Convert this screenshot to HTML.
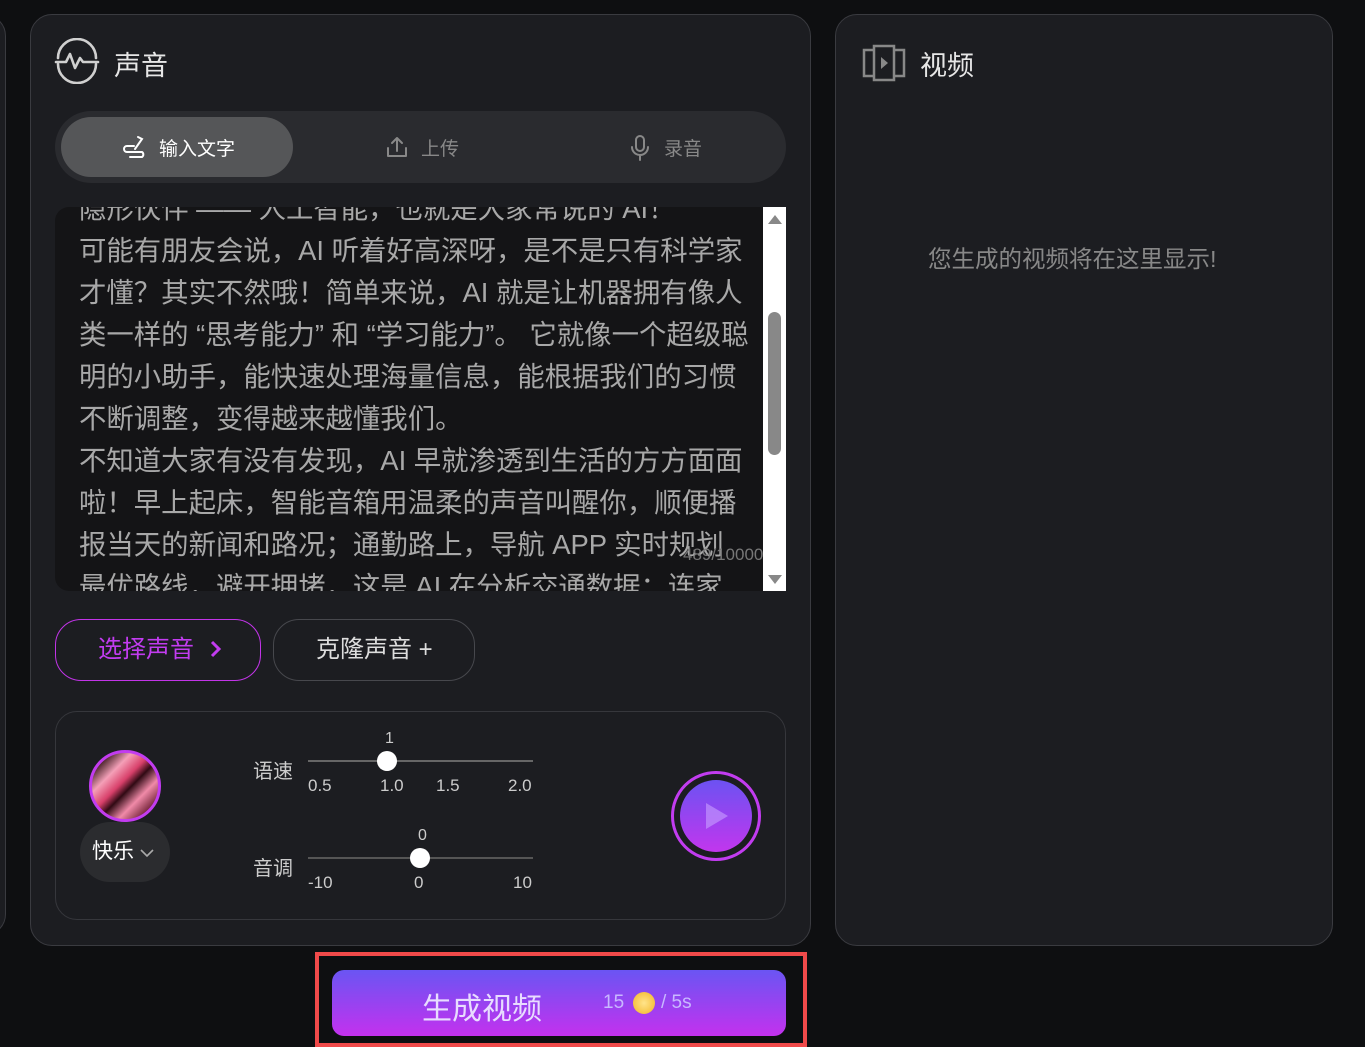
<!DOCTYPE html>
<html><head><meta charset="utf-8">
<style>
*{box-sizing:border-box;margin:0;padding:0}
body{width:1365px;height:1047px;background:#0e0f11;font-family:"Liberation Sans","Noto Sans CJK SC",sans-serif;position:relative;overflow:hidden;color:#ddd}
.abs{position:absolute}
.panel{position:absolute;background:#1c1d21;border:1px solid #3a3b40;border-radius:22px}
</style></head><body>
<div class="panel" style="left:-40px;top:14px;width:46px;height:922px"></div>
<div class="panel" style="left:30px;top:14px;width:781px;height:932px"></div>
<div class="panel" style="left:835px;top:14px;width:498px;height:932px"></div>

<svg class="abs" style="left:54px;top:38px" width="46" height="46" viewBox="0 0 46 46" fill="none" stroke="#d0d0d0" stroke-width="2.6" stroke-linecap="round" stroke-linejoin="round">
<path d="M4 20 A19 19 0 0 1 42 20"/><path d="M4 26 A19 19 0 0 0 42 26"/><path d="M2 24 H12 L16 16 L21 30 L26 20 L29 24 H44"/>
</svg>
<div class="abs" style="left:114px;top:44px;font-size:27px;color:#e6e6e6">声音</div>

<div class="abs" style="left:55px;top:111px;width:731px;height:72px;background:#2a2b2f;border-radius:36px"></div>
<div class="abs" style="left:61px;top:117px;width:232px;height:60px;background:#555658;border-radius:30px"></div>
<svg class="abs" style="left:122px;top:135px" width="26" height="24" viewBox="0 0 26 24" fill="none" stroke="#fff" stroke-width="2" stroke-linecap="round"><path d="M16 2 L20 4 L13 14"/><path d="M12 11 H5 A3 3 0 0 0 5 17 H20 A3 3 0 0 1 20 22 H8"/></svg>
<div class="abs" style="left:159px;top:134px;font-size:19px;color:#fff">输入文字</div>
<svg class="abs" style="left:385px;top:135px" width="24" height="24" viewBox="0 0 24 24" fill="none" stroke="#888" stroke-width="2" stroke-linecap="round" stroke-linejoin="round"><path d="M12 16 V3 M7 8 L12 3 L17 8"/><path d="M3 13 V21 H21 V13"/></svg>
<div class="abs" style="left:421px;top:134px;font-size:19px;color:#888">上传</div>
<svg class="abs" style="left:630px;top:135px" width="20" height="26" viewBox="0 0 20 26" fill="none" stroke="#888" stroke-width="2" stroke-linecap="round"><rect x="6" y="1" width="8" height="15" rx="4"/><path d="M2 12 A8 8 0 0 0 18 12 M10 20 V25"/></svg>
<div class="abs" style="left:664px;top:134px;font-size:19px;color:#888">录音</div>

<div class="abs" style="left:55px;top:207px;width:731px;height:384px;background:#141416;border-radius:14px 0 0 14px;overflow:hidden">
 <div class="abs" style="left:24px;top:-19px;width:700px;font-size:27.4px;line-height:42px;color:#a8a8a8;white-space:nowrap">
 隐形伙伴 —— 人工智能，也就是大家常说的 AI！<br>可能有朋友会说，AI 听着好高深呀，是不是只有科学家<br>才懂？其实不然哦！简单来说，AI 就是让机器拥有像人<br>类一样的 “思考能力” 和 “学习能力”。 它就像一个超级聪<br>明的小助手，能快速处理海量信息，能根据我们的习惯<br>不断调整，变得越来越懂我们。<br>不知道大家有没有发现，AI 早就渗透到生活的方方面面<br>啦！早上起床，智能音箱用温柔的声音叫醒你，顺便播<br>报当天的新闻和路况；通勤路上，导航 APP 实时规划<br>最优路线，避开拥堵，这是 AI 在分析交通数据；连家
 </div>
 <div class="abs" style="left:628px;top:338px;font-size:17px;color:#777">489/10000</div>
 <div class="abs" style="left:708px;top:0;width:23px;height:384px;background:#fff"></div>
 <div class="abs" style="left:713px;top:8px;width:0;height:0;border-left:7px solid transparent;border-right:7px solid transparent;border-bottom:9px solid #888"></div>
 <div class="abs" style="left:713px;top:368px;width:0;height:0;border-left:7px solid transparent;border-right:7px solid transparent;border-top:9px solid #888"></div>
 <div class="abs" style="left:713px;top:105px;width:13px;height:143px;background:#888;border-radius:7px"></div>
</div>

<div class="abs" style="left:55px;top:619px;width:206px;height:62px;border:1.5px solid #c234e8;border-radius:26px;color:#c23cf0;font-size:24px;line-height:59px;padding-left:42px">选择声音 <svg width="14" height="18" viewBox="0 0 14 18" style="margin-left:8px;vertical-align:-1px"><path d="M3 2 L10 9 L3 16" fill="none" stroke="#c23cf0" stroke-width="3"/></svg></div>
<div class="abs" style="left:273px;top:619px;width:202px;height:62px;border:1.5px solid #47484d;border-radius:26px;color:#ddd;font-size:24px;line-height:59px;padding-left:42px">克隆声音 +</div>

<div class="abs" style="left:55px;top:711px;width:731px;height:209px;border:1px solid #36373c;border-radius:22px;background:#1c1d21"></div>
<div class="abs" style="left:89px;top:750px;width:72px;height:72px;border-radius:50%;border:3px solid #c23cf0;background:linear-gradient(135deg,#200508 10%,#f4a0b8 30%,#d8406a 45%,#300a14 55%,#f08aa8 70%,#5a0e22 90%);overflow:hidden"></div>
<div class="abs" style="left:80px;top:822px;width:90px;height:60px;border-radius:30px;background:#2b2c2f;font-size:21px;color:#fff;line-height:60px;padding-left:12px">快乐 <svg width="14" height="10" viewBox="0 0 14 10"><path d="M1 2 L7 8 L13 2" fill="none" stroke="#aaa" stroke-width="1.6"/></svg></div>

<div class="abs" style="left:253px;top:755px;font-size:20px;color:#ccc">语速</div>
<div class="abs" style="left:308px;top:760px;width:225px;height:2px;background:#666"></div>
<div class="abs" style="left:377px;top:751px;width:20px;height:20px;border-radius:50%;background:#fff"></div>
<div class="abs" style="left:385px;top:730px;font-size:16px;color:#ccc">1</div>
<div class="abs" style="left:308px;top:776px;font-size:17px;color:#ccc">0.5</div>
<div class="abs" style="left:380px;top:776px;font-size:17px;color:#ccc">1.0</div>
<div class="abs" style="left:436px;top:776px;font-size:17px;color:#ccc">1.5</div>
<div class="abs" style="left:508px;top:776px;font-size:17px;color:#ccc">2.0</div>

<div class="abs" style="left:253px;top:852px;font-size:20px;color:#ccc">音调</div>
<div class="abs" style="left:308px;top:857px;width:225px;height:2px;background:#555"></div>
<div class="abs" style="left:410px;top:848px;width:20px;height:20px;border-radius:50%;background:#fff"></div>
<div class="abs" style="left:418px;top:827px;font-size:16px;color:#ccc">0</div>
<div class="abs" style="left:308px;top:873px;font-size:17px;color:#ccc">-10</div>
<div class="abs" style="left:414px;top:873px;font-size:17px;color:#ccc">0</div>
<div class="abs" style="left:513px;top:873px;font-size:17px;color:#ccc">10</div>

<div class="abs" style="left:671px;top:771px;width:90px;height:90px;border-radius:50%;border:3px solid #c23cf0"></div>
<div class="abs" style="left:680px;top:780px;width:72px;height:72px;border-radius:50%;background:linear-gradient(#6c52f2,#c236ee)"></div>
<div class="abs" style="left:706px;top:803px;width:0;height:0;border-top:13px solid transparent;border-bottom:13px solid transparent;border-left:22px solid rgba(200,160,255,0.6)"></div>

<svg class="abs" style="left:862px;top:44px" width="44" height="38" viewBox="0 0 44 38" fill="none" stroke="#888" stroke-width="2.5"><rect x="12" y="2" width="20" height="34"/><path d="M12 6 H2 V32 H12 M32 6 H42 V32 H32"/><path d="M19 13 L26 19 L19 25 Z" fill="#888" stroke="none"/></svg>
<div class="abs" style="left:920px;top:44px;font-size:27px;color:#e6e6e6">视频</div>
<div class="abs" style="left:928px;top:240px;font-size:23.5px;color:#888">您生成的视频将在这里显示!</div>

<div class="abs" style="left:315px;top:952px;width:492px;height:95px;border:4px solid #f04a4a"></div>
<div class="abs" style="left:332px;top:970px;width:454px;height:66px;border-radius:12px;background:linear-gradient(#6a55f3,#c431ee)"></div>
<div class="abs" style="left:422px;top:984px;font-size:30px;color:#e8dcff">生成视频</div>
<div class="abs" style="left:603px;top:992px;font-size:19px;color:#c8b8ff">15</div>
<div class="abs" style="left:633px;top:992px;width:22px;height:22px;border-radius:50%;background:radial-gradient(circle,#ffe48a,#f2b526)"></div>
<div class="abs" style="left:661px;top:992px;font-size:19px;color:#c8b8ff">/ 5s</div>
</body></html>
